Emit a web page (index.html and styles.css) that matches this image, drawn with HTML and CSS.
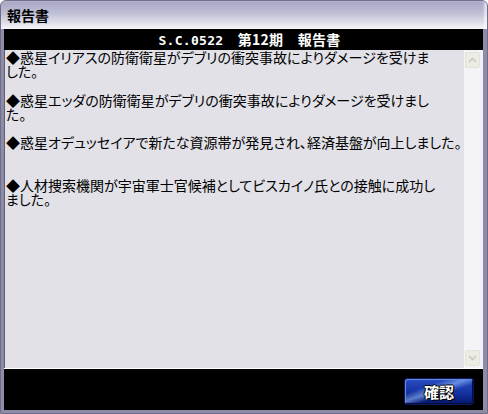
FILE: index.html
```html
<!DOCTYPE html>
<html lang="ja">
<head>
  <meta charset="UTF-8">
  <title>報告書</title>
  <link rel="stylesheet" href="styles.css">
</head>
<body>

  <div class="window">
    <div class="titlebar">報告書</div>

    <div class="header"><span class="code">S.C.0522</span>　第12期　報告書</div>

    <div class="panel">
      <div class="report">
        <p>◆惑星イリアスの防衛衛星がデブリの衝突事故によりダメージを受けま<br>した。</p>
        <p>◆惑星エッダの防衛衛星がデブリの衝突事故によりダメージを受けまし<br>た。</p>
        <p>◆惑星オデュッセイアで新たな資源帯が発見され、経済基盤が向上しました。</p>
        <p>◆人材捜索機関が宇宙軍士官候補としてビスカイノ氏との接触に成功し<br>ました。</p>
      </div>
      <div class="scrollbar">
        <div class="arrow up">
          <svg width="9" height="6" viewBox="0 0 9 6"><path d="M1 5 L4.5 1.5 L8 5" fill="none" stroke="#c9c9c2" stroke-width="1.6"/></svg>
        </div>
        <div class="arrow down">
          <svg width="9" height="6" viewBox="0 0 9 6"><path d="M1 1 L4.5 4.5 L8 1" fill="none" stroke="#c9c9c2" stroke-width="1.6"/></svg>
        </div>
      </div>
    </div>

    <div class="footer">
      <button class="ok">確認</button>
    </div>
  </div>

</body>
</html>
```

FILE: styles.css
```css
* { box-sizing: border-box; }

body {
  margin: 0;
  background: #ffffff;
  font-family: "Noto Sans CJK JP", sans-serif;
  color: #000;
}

.window {
  width: 488px;
  height: 414px;
  display: flex;
  flex-direction: column;
  background: #8c8ca8;
  border: 1px solid #6e6e88;
  border-radius: 6px 6px 0 0;
  padding: 0 4px 3px 3px;
  overflow: hidden;
}

.titlebar {
  height: 28px;
  margin: 0 -4px 0 -3px;
  padding: 5px 0 0 6px;
  font-size: 14px;
  font-weight: bold;
  line-height: 18px;
  background: linear-gradient(#a6a6c4, #bcbcd4 40%, #dcdce8 75%, #f6f6fa);
  box-shadow: inset -3px 0 2px rgba(255,255,255,0.6);
}

.header {
  height: 21px;
  background: #000;
  color: #fff;
  font-size: 14px;
  font-weight: bold;
  line-height: 21px;
  text-align: center;
  padding-left: 12px;
  letter-spacing: 0.3px;
  white-space: nowrap;
}

.code {
  font-family: "DejaVu Sans Mono", monospace;
  font-size: 13px;
}

.panel {
  flex: 1;
  display: flex;
  background: #e1e1e7;
  border-left: 1px solid #5e5e70;
  border-right: 3px solid #f2f2f6;
}

.report {
  flex: 1;
  padding: 0 0 0 1px;
  font-size: 14px;
  line-height: 14.2px;
  font-feature-settings: "palt";
  white-space: nowrap;
}

.report p {
  margin: 0 0 14.2px;
  min-height: 28.4px;
}

.scrollbar {
  width: 16px;
  background: #f4f4f6;
  display: flex;
  flex-direction: column;
  justify-content: space-between;
  padding: 2px 0 2px 1px;
}

.arrow {
  width: 15px;
  height: 16px;
  background: #ecebe4;
  border: 1px solid #e2e1da;
  border-radius: 2px;
  display: flex;
  align-items: center;
  justify-content: center;
}

.footer {
  height: 42px;
  background: #000;
  border-top: 1px solid #fff;
  display: flex;
  justify-content: flex-end;
  align-items: flex-start;
  padding: 9px 9px 0 0;
}

.ok {
  width: 70px;
  height: 27px;
  border: 1px solid #0a1a5a;
  border-radius: 3px;
  background:
    linear-gradient(160deg, transparent 30%, rgba(160,200,255,0.55) 45%, transparent 60%),
    linear-gradient(#2a4cc0, #1838a8 45%, #0c2486 80%, #061466);
  box-shadow: inset 1px 1px 0 #6a8ae8, inset -1px -1px 0 #040c40;
  color: #fff;
  font-family: "Noto Sans CJK JP", sans-serif;
  font-size: 15px;
  font-weight: bold;
  line-height: 23px;
  padding: 0;
  text-shadow: 1px 1px 0 #000, -1px 0 0 #000, 0 -1px 0 #000, 1px 0 0 #000;
}
```
